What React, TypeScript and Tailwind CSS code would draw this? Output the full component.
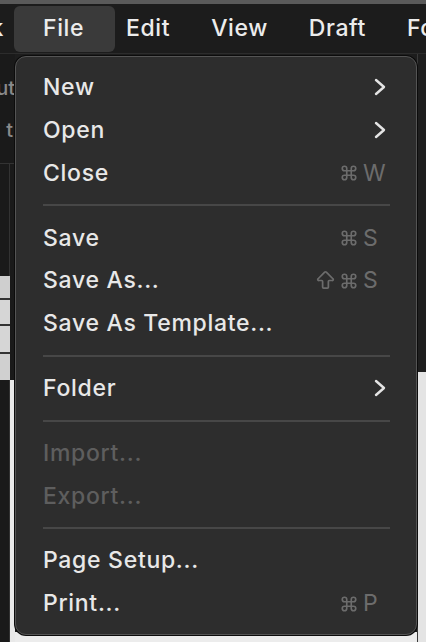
import { Command, ArrowBigUp } from 'lucide-react';

type Item =
  | { kind: 'sep' }
  | { kind: 'item'; label: string; submenu?: boolean; disabled?: boolean; mods?: ('cmd' | 'shift')[]; keyChar?: string };

const items: Item[] = [
  { kind: 'item', label: 'New', submenu: true },
  { kind: 'item', label: 'Open', submenu: true },
  { kind: 'item', label: 'Close', mods: ['cmd'], keyChar: 'W' },
  { kind: 'sep' },
  { kind: 'item', label: 'Save', mods: ['cmd'], keyChar: 'S' },
  { kind: 'item', label: 'Save As...', mods: ['shift', 'cmd'], keyChar: 'S' },
  { kind: 'item', label: 'Save As Template...' },
  { kind: 'sep' },
  { kind: 'item', label: 'Folder', submenu: true },
  { kind: 'sep' },
  { kind: 'item', label: 'Import...', disabled: true },
  { kind: 'item', label: 'Export...', disabled: true },
  { kind: 'sep' },
  { kind: 'item', label: 'Page Setup...' },
  { kind: 'item', label: 'Print...', mods: ['cmd'], keyChar: 'P' },
];

function Chevron() {
  return (
    <svg width="14" height="18" viewBox="0 0 14 18" className="text-[#e4e4e4]">
      <polyline points="3,2 11,9 3,16" fill="none" stroke="currentColor" strokeWidth="2.4" strokeLinecap="round" strokeLinejoin="round" />
    </svg>
  );
}

function Shortcut({ mods, keyChar }: { mods: ('cmd' | 'shift')[]; keyChar: string }) {
  return (
    <div className="flex items-center text-[#6c6c6c]">
      <div className="flex items-center gap-[3px]">
        {mods.map((m) =>
          m === 'cmd' ? (
            <Command key={m} size={18} strokeWidth={2.2} />
          ) : (
            <ArrowBigUp key={m} size={23} strokeWidth={1.8} />
          )
        )}
      </div>
      <span className="w-[37px] pl-[5px] text-[23px] tracking-[0.5px]">{keyChar}</span>
    </div>
  );
}

export default function App() {
  const menus = ['Edit', 'View', 'Draft'];

  return (
    <div
      className="relative w-[426px] h-[642px] overflow-hidden bg-[#161616] flex flex-col"
      style={{ fontFamily: 'Inter, "Liberation Sans", sans-serif' }}
    >
      {/* top window strip */}
      <div className="h-[4px] bg-[#5a5a5a]" />

      {/* menu bar */}
      <div className="h-[50px] bg-[#1c1c1c] border-b border-[#2c2c2c] flex items-center text-[23px] tracking-[0.6px] font-medium text-[#ececec] whitespace-nowrap">
        <div className="w-[14px] shrink-0 overflow-hidden flex justify-end">
          <span className="mr-[10px]">k</span>
        </div>
        <div className="w-[101px] shrink-0 h-[46px] flex items-center pl-[29px] rounded-[6px] bg-[#3a3a3a]">File</div>
        <div className="flex items-center gap-[41px] ml-[11px]">
          {menus.map((m) => (
            <span key={m}>{m}</span>
          ))}
          <span>Fo</span>
        </div>
      </div>

      {/* app content behind the menu */}
      <div className="flex-1 flex">
        <div className="w-[15px] flex flex-col bg-[#1a1a1a] text-[20px] text-[#8a8a8a] font-medium">
          <div className="h-[22px]" />
          <div className="h-[24px] overflow-hidden flex justify-end leading-[24px]">
            <span>ut</span>
          </div>
          <div className="h-[18px]" />
          <div className="h-[24px] overflow-hidden flex justify-end leading-[24px]">
            <span className="mr-[2px]">t</span>
          </div>
          <div className="h-[22px] border-b border-[#333]" />
          <div className="h-[112px] border-r border-[#333] w-[10px]" />
          <div className="w-[10px] flex flex-col gap-[2px] bg-[#333]">
            <div className="h-[22px] bg-[#cfcfcf]" />
            <div className="h-[24px] bg-[#d6d6d6]" />
            <div className="h-[26px] bg-[#d6d6d6]" />
            <div className="h-[26px] bg-[#d0d0d0]" />
          </div>
          <div className="flex-1 flex">
            <div className="w-[10px] border-r border-[#333]" />
            <div className="flex-1 bg-[#e9e9e9]" />
          </div>
        </div>
        <div className="flex-1 flex flex-col">
          <div className="flex-1 bg-[#1d1d1d]" />
          <div className="h-[10px] bg-[#ececec]" />
        </div>
        <div className="w-[9px] flex flex-col border-l border-[#3a3a3a]">
          <div className="h-[318px] bg-[#1e1e1e]" />
          <div className="flex-1 bg-[#e4e4e4]" />
        </div>
      </div>

      {/* File menu dropdown */}
      <div className="absolute left-[15px] top-[56px] w-[402px] h-[579px] rounded-[11px] bg-[#2d2d2d] border border-[#545454] shadow-[0_0_0_1px_#0c0c0c] py-[9px] flex flex-col">
        {items.map((it, idx) =>
          it.kind === 'sep' ? (
            <div key={idx} className="h-[22px] flex items-center pl-[27px] pr-[26px]">
              <div className="h-[2px] w-full bg-[#474747]" />
            </div>
          ) : (
            <div key={idx} className="h-[43px] flex items-center justify-between pl-[27px] pr-[29px]">
              <span
                className={`text-[23px] tracking-[0.7px] font-medium whitespace-nowrap ${
                  it.disabled ? 'text-[#5e5e5e]' : 'text-[#e8e8e8]'
                }`}
              >
                {it.label}
              </span>
              {it.submenu && <Chevron />}
              {it.mods && it.keyChar && (
                <div className="-mr-[8px]">
                  <Shortcut mods={it.mods} keyChar={it.keyChar} />
                </div>
              )}
            </div>
          )
        )}
      </div>
    </div>
  );
}
